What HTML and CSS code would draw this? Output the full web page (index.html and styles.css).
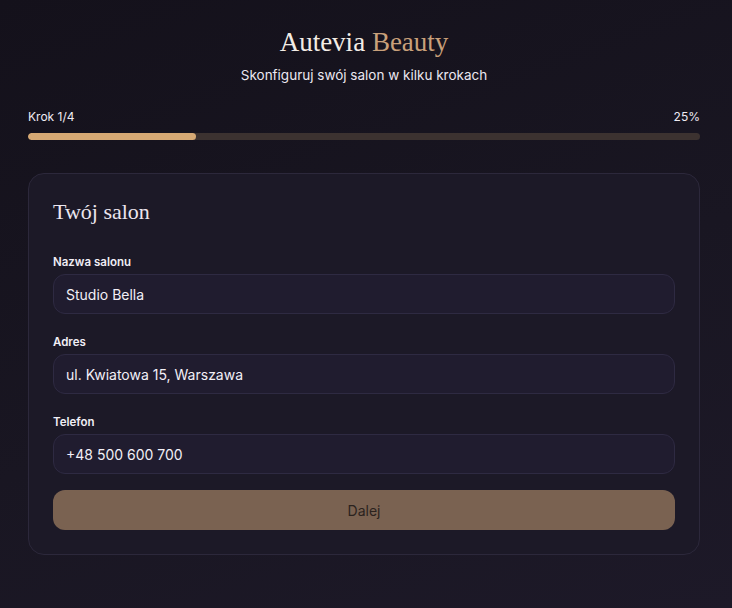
FILE: index.html
```html
<!DOCTYPE html>
<html lang="pl">
<head>
    <meta charset="UTF-8">
    <meta name="viewport" content="width=device-width, initial-scale=1.0">
    <title>Autevia Beauty - Konfiguracja</title>
    <link rel="stylesheet" href="styles.css">
</head>
<body>
    <div class="container">
        <header class="header">
            <h1 class="logo">Autevia <span class="accent">Beauty</span></h1>
            <p class="subtitle">Skonfiguruj swój salon w kilku krokach</p>
        </header>

        <div class="progress">
            <div class="progress-info">
                <span>Krok 1/4</span>
                <span>25%</span>
            </div>
            <div class="progress-track">
                <div class="progress-fill" style="width: 25%"></div>
            </div>
        </div>

        <form class="card">
            <h2 class="card-title">Twój salon</h2>

            <div class="field">
                <label for="salonName">Nazwa salonu</label>
                <input type="text" id="salonName" value="Studio Bella">
            </div>
            <div class="field">
                <label for="salonAddress">Adres</label>
                <input type="text" id="salonAddress" value="ul. Kwiatowa 15, Warszawa">
            </div>
            <div class="field">
                <label for="salonPhone">Telefon</label>
                <input type="text" id="salonPhone" value="+48 500 600 700">
            </div>

            <button type="button" class="btn-next">Dalej</button>
        </form>
    </div>
</body>
</html>
```

FILE: styles.css
```css
html, body {
    height: 100%;
}
body {
    margin: 0;
    font-family: Inter, "DejaVu Sans", sans-serif;
    color: #ece8f2;
    background: linear-gradient(160deg, #14111b 0%, #191622 55%, #1d1928 100%);
}
.container {
    padding: 26px 32px 40px 28px;
}
.header {
    text-align: center;
}
.logo {
    margin: 0;
    font-family: "Liberation Serif", "DejaVu Serif", serif;
    font-weight: 400;
    font-size: 27px;
    line-height: 32px;
    color: #f3ede6;
}
.logo .accent {
    color: #c9a07a;
}
.subtitle {
    margin: 8px 0 0;
    font-size: 13.5px;
    line-height: 18px;
    color: #ebe7f0;
}
.progress {
    margin-top: 25px;
}
.progress-info {
    display: flex;
    justify-content: space-between;
    font-size: 12px;
    line-height: 16px;
    color: #efebf3;
}
.progress-track {
    margin-top: 8px;
    height: 7px;
    border-radius: 4px;
    background-color: #3c3230;
    overflow: hidden;
}
.progress-fill {
    height: 100%;
    border-radius: 4px;
    background-color: #d6a974;
}
.card {
    margin-top: 33px;
    padding: 24px;
    border: 1px solid #2c283b;
    border-radius: 16px;
    background-color: #1c1927;
}
.card-title {
    margin: 0 0 28px;
    font-family: "Liberation Serif", "DejaVu Serif", serif;
    font-weight: 400;
    font-size: 22px;
    line-height: 28px;
    color: #ebe6ee;
}
.field {
    margin-bottom: 20px;
}
.field:last-of-type {
    margin-bottom: 16px;
}
.field label {
    display: block;
    margin-bottom: 4px;
    font-size: 11.5px;
    font-weight: 600;
    line-height: 16px;
    color: #f1eef5;
}
.field input {
    box-sizing: border-box;
    width: 100%;
    height: 40px;
    padding: 0 12px;
    border: 1px solid #2e2a42;
    border-radius: 12px;
    background-color: #201c2f;
    font-family: inherit;
    font-size: 14px;
    color: #f2eff6;
    outline: none;
}
.btn-next {
    display: block;
    width: 100%;
    height: 40px;
    border: none;
    border-radius: 12px;
    background-color: #7a6251;
    font-family: inherit;
    font-size: 14px;
    color: #2b221e;
    cursor: pointer;
}
```
